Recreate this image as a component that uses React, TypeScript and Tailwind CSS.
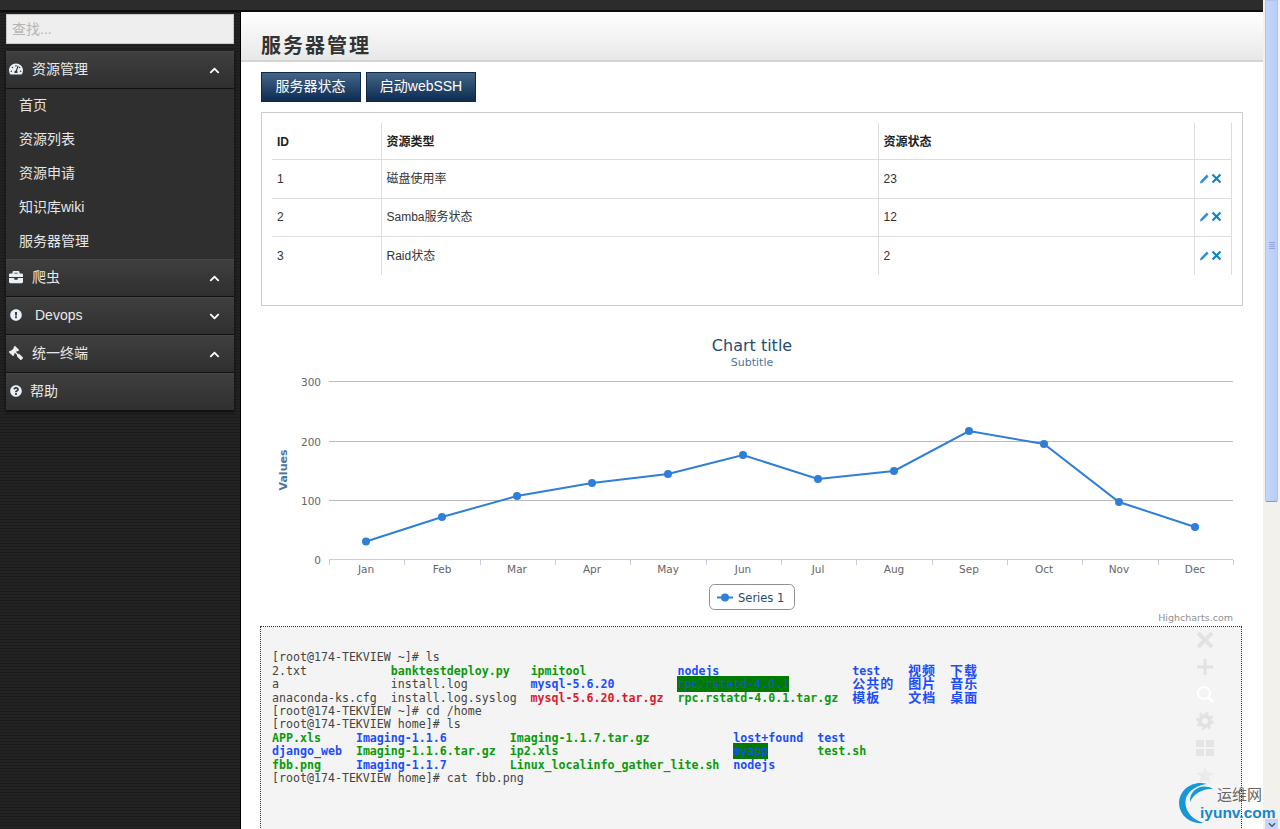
import React from "react";
import { FaTachometerAlt, FaBriefcase, FaExclamationCircle, FaGavel, FaQuestionCircle, FaChevronUp, FaChevronDown } from "react-icons/fa";

const sans = "font-['Liberation_Sans','Noto_Sans_CJK_SC',sans-serif]";

function Header({ icon, label, chevron, labelClass }: { icon: React.ReactNode; label: string; chevron?: "up" | "down"; labelClass: string }) {
  return (
    <div className="flex h-[38px] items-center border-b border-b-[#111] border-t border-t-[#474747] bg-gradient-to-b from-[#3f3f3f] to-[#2f2f2f] pb-[2px] pl-[3px] pr-[14px] text-[14px] text-[#e8e8e8]">
      <span className="flex w-[14px] justify-center text-[#eaf0f8]">{icon}</span>
      <span className={labelClass}>{label}</span>
      <span className="flex-1" />
      {chevron === "up" && <FaChevronUp size={11} className="mt-[3px] text-white" />}
      {chevron === "down" && <FaChevronDown size={11} className="mt-[3px] text-white" />}
    </div>
  );
}

function Row({ id, type, status, strong, height }: { id: string; type: string; status: string; strong?: boolean; height: string }) {
  const tone = strong ? "font-bold text-[#222]" : "text-[#333]";
  const pad = strong ? "pt-[2px]" : "";
  return (
    <tr className={`border-b border-[#ddd] last:border-b-0 ${tone}`}>
      <td className={`${height} ${pad} border-r border-[#ddd] pl-[5px]`}>{id}</td>
      <td className={`${pad} border-r border-[#ddd] pl-[5px]`}>{type}</td>
      <td className={`${pad} border-r border-[#ddd] pl-[5px]`}>{status}</td>
      <td className="border-r border-[#ddd] pb-[1px] pl-[4px]">
        {!strong && (
          <span className="flex items-center gap-[1px]">
            <svg width="11" height="11" viewBox="0 0 11 11"><path d="M1 10.5 L1.5 8 L7.8 1.6 L9.6 3.4 L3.3 9.8 Z" fill="#2f8fd8" /></svg>
            <svg width="11" height="11" viewBox="0 0 11 11"><path d="M1.5 1.5 L9.5 9.5 M9.5 1.5 L1.5 9.5" stroke="#0b87c9" strokeWidth="2.2" /></svg>
          </span>
        )}
      </td>
    </tr>
  );
}

const months = ["Jan", "Feb", "Mar", "Apr", "May", "Jun", "Jul", "Aug", "Sep", "Oct", "Nov", "Dec"];
const pts: [number, number][] = [[105, 211.5], [181, 187], [256, 166], [331, 153], [407, 144], [482, 125], [557, 149], [633, 141], [708, 101], [783, 114], [858, 172], [934, 197]];

function Chart() {
  const label = { fontFamily: "'DejaVu Sans',sans-serif", fontSize: 10.5 };
  return (
    <svg width="982" height="296" viewBox="0 0 982 296" className="block">
      <text x="491" y="21" textAnchor="middle" fill="#274b6d" style={{ fontFamily: "'DejaVu Sans',sans-serif", fontSize: 16 }}>Chart title</text>
      <text x="491" y="36" textAnchor="middle" fill="#4d759e" style={{ fontFamily: "'DejaVu Sans',sans-serif", fontSize: 11 }}>Subtitle</text>
      {[51.5, 111.5, 170.5].map((y) => <line key={y} x1="68" x2="972" y1={y} y2={y} stroke="#bbb" />)}
      <line x1="68" x2="972" y1="229.5" y2="229.5" stroke="#c0d0e0" />
      {Array.from({ length: 13 }, (_, i) => {
        const x = Math.round(68 + i * 75.33) + 0.5;
        return <line key={i} x1={x} x2={x} y1="230" y2="235" stroke="#c0d0e0" />;
      })}
      {[["300", 56], ["200", 116], ["100", 175], ["0", 234]].map(([t, y]) => (
        <text key={t} x="60" y={y as number} textAnchor="end" fill="#666" style={label}>{t}</text>
      ))}
      {months.map((m, i) => (
        <text key={m} x={pts[i][0]} y="243" textAnchor="middle" fill="#666" style={label}>{m}</text>
      ))}
      <text transform="translate(26 140) rotate(-90)" textAnchor="middle" fill="#4d759e" style={{ fontFamily: "'DejaVu Sans',sans-serif", fontSize: 11, fontWeight: 700 }}>Values</text>
      <polyline points={pts.map((p) => p.join(",")).join(" ")} fill="none" stroke="#2f7ed8" strokeWidth="2" />
      {pts.map((p, i) => <circle key={i} cx={p[0]} cy={p[1]} r="4" fill="#2f7ed8" />)}
      <rect x="448.5" y="254.5" width="85" height="25" rx="5" fill="#fff" stroke="#909090" />
      <line x1="456" x2="472" y1="267.5" y2="267.5" stroke="#2f7ed8" strokeWidth="2" />
      <circle cx="464" cy="267.5" r="4" fill="#2f7ed8" />
      <text x="477" y="272" fill="#274b6d" style={{ fontFamily: "'DejaVu Sans',sans-serif", fontSize: 11.5 }}>Series 1</text>
      <text x="972" y="291" textAnchor="end" fill="#909090" style={{ fontFamily: "'DejaVu Sans',sans-serif", fontSize: 9.5 }}>Highcharts.com</text>
    </svg>
  );
}

const g = "font-bold text-[#0a9a0a]";
const b = "font-bold text-[#1c4dff]";
const r = "font-bold text-[#e0182d]";
const hl = "font-normal text-[#1c4dff] bg-[#007a00] py-[1px]";

function Cjk({ children }: { children: string }) {
  return <span className="inline-block h-[13.4px] align-top text-[13px] font-bold leading-[12px] tracking-[1px] text-[#1c4dff]">{children}</span>;
}

function Terminal() {
  return (
    <pre className="font-['DejaVu_Sans_Mono','Noto_Sans_CJK_SC',monospace] text-[11.62px] leading-[13.4px] text-[#444]">
      {"[root@174-TEKVIEW ~]# ls\n"}
      {"2.txt            "}<span className={g}>banktestdeploy.py</span>{"   "}<span className={g}>ipmitool</span>{"             "}<span className={b}>nodejs</span>{"                   "}<span className={b}>test</span>{"    "}<Cjk>视频</Cjk>{"  "}<Cjk>下载</Cjk>{"\n"}
      {"a                install.log         "}<span className={b}>mysql-5.6.20</span>{"         "}<span className={hl}>rpc.rstatd-4.0.1</span>{"         "}<Cjk>公共的</Cjk>{"  "}<Cjk>图片</Cjk>{"  "}<Cjk>音乐</Cjk>{"\n"}
      {"anaconda-ks.cfg  install.log.syslog  "}<span className={r}>mysql-5.6.20.tar.gz</span>{"  "}<span className={g}>rpc.rstatd-4.0.1.tar.gz</span>{"  "}<Cjk>模板</Cjk>{"    "}<Cjk>文档</Cjk>{"  "}<Cjk>桌面</Cjk>{"\n"}
      {"[root@174-TEKVIEW ~]# cd /home\n"}
      {"[root@174-TEKVIEW home]# ls\n"}
      <span className={g}>APP.xls</span>{"     "}<span className={b}>Imaging-1.1.6</span>{"         "}<span className={g}>Imaging-1.1.7.tar.gz</span>{"            "}<span className={b}>lost+found</span>{"  "}<span className={b}>test</span>{"\n"}
      <span className={b}>django_web</span>{"  "}<span className={g}>Imaging-1.1.6.tar.gz</span>{"  "}<span className={g}>ip2.xls</span>{"                         "}<span className={hl}>myapp</span>{"       "}<span className={g}>test.sh</span>{"\n"}
      <span className={g}>fbb.png</span>{"     "}<span className={b}>Imaging-1.1.7</span>{"         "}<span className={g}>Linux_localinfo_gather_lite.sh</span>{"  "}<span className={b}>nodejs</span>{"\n"}
      {"[root@174-TEKVIEW home]# cat fbb.png"}
    </pre>
  );
}

export default function App() {
  return (
    <div className={`${sans} relative flex h-[829px] w-[1280px] overflow-hidden bg-[#222]`}>
      <div className="flex min-w-0 flex-1 flex-col">
        <div className="h-[12px] shrink-0 border-b-2 border-[#0c0c0c] bg-[#2c2c2c]" />
        <div className="flex min-h-0 flex-1">
          <aside className="w-[241px] shrink-0 border-r border-black bg-[#212121] bg-[repeating-linear-gradient(0deg,#1c1c1c_0px,#1c1c1c_1px,#232323_1px,#232323_3px),repeating-linear-gradient(90deg,#1c1c1c_0px,#1c1c1c_1px,transparent_1px,transparent_3px)] pl-[6px] pr-[6px] pt-[2px]">
            <div className="flex h-[30px] w-[228px] items-center border border-[#c8c8c8] bg-[#eee] pl-[5px] text-[14px] text-[#b4b4b4]">查找...</div>
            <div className="mt-[7px] w-[228px] shadow-[0_1px_4px_rgba(0,0,0,0.6)]">
              <Header icon={<FaTachometerAlt size={14} />} label="资源管理" chevron="up" labelClass="ml-[9px]" />
              <div className="flex flex-col bg-[#2f2f2f] pl-[13px] text-[14px] text-[#e6e6e6]">
                {["首页", "资源列表", "资源申请", "知识库wiki", "服务器管理"].map((t) => (
                  <div key={t} className="flex h-[34px] items-center pb-[2px]">{t}</div>
                ))}
              </div>
              <Header icon={<FaBriefcase size={14} />} label="爬虫" chevron="up" labelClass="ml-[9px]" />
              <Header icon={<FaExclamationCircle size={12} />} label="Devops" chevron="down" labelClass="ml-[12px]" />
              <Header icon={<FaGavel size={14} className="-scale-x-100" />} label="统一终端" chevron="up" labelClass="ml-[9px]" />
              <Header icon={<FaQuestionCircle size={12} />} label="帮助" labelClass="ml-[7px]" />
            </div>
          </aside>
          <main className="relative min-w-0 flex-1 overflow-hidden bg-white">
            <div className="flex h-[50px] items-end border-b-2 border-[#d4d4d4] bg-gradient-to-b from-white to-[#e8e8e8] pb-[1px] pl-[20px]">
              <h1 className="text-[20px] font-bold leading-[26px] tracking-[2px] text-[#333]">服务器管理</h1>
            </div>
            <div className="ml-[20px] mt-[10px] flex gap-[5px]">
              <div className="flex h-[30px] w-[100px] items-center justify-center border border-[#0f2a48] bg-gradient-to-b from-[#426689] to-[#0e2d50] pb-[2px] pr-[1px] text-[14px] text-white">服务器状态</div>
              <div className="flex h-[30px] w-[110px] items-center justify-center border border-[#0f2a48] bg-gradient-to-b from-[#426689] to-[#0e2d50] pb-[2px] text-[14px] text-white">启动webSSH</div>
            </div>
            <div className="ml-[20px] mt-[10px] h-[194px] w-[982px] border border-[#ccc] px-[10px] pt-[10px]">
              <table className="w-[959px] table-fixed border-collapse text-[12px]">
                <colgroup>
                  <col className="w-[109px]" />
                  <col className="w-[497px]" />
                  <col className="w-[316px]" />
                  <col className="w-[37px]" />
                </colgroup>
                <tbody>
                  <Row id="ID" type="资源类型" status="资源状态" strong height="h-[36px]" />
                  <Row id="1" type="磁盘使用率" status="23" height="h-[39px]" />
                  <Row id="2" type="Samba服务状态" status="12" height="h-[38px]" />
                  <Row id="3" type="Raid状态" status="2" height="h-[39px]" />
                </tbody>
              </table>
            </div>
            <div className="ml-[20px] mt-[24px]"><Chart /></div>
            <div className="ml-[19px] h-[300px] w-[982px] border border-dotted border-[#333] bg-[#f4f4f4] pl-[11px] pt-[24.4px]">
              <Terminal />
            </div>
            {/* floating translucent toolbar over the terminal */}
            <div className="absolute left-[954px] top-[619px] flex w-[20px] flex-col items-center gap-[9px]">
              <svg width="18" height="18" viewBox="0 0 18 18"><path d="M2 2 L16 16 M16 2 L2 16" stroke="#e2e2e2" strokeWidth="4" /></svg>
              <svg width="18" height="18" viewBox="0 0 18 18"><path d="M9 1 V17 M1 9 H17" stroke="#e2e2e2" strokeWidth="3" /></svg>
              <svg width="18" height="18" viewBox="0 0 18 18"><circle cx="8" cy="8" r="6" fill="none" stroke="#fff" strokeWidth="2" /><path d="M12 12 L17 17" stroke="#fff" strokeWidth="3" /></svg>
              <svg width="18" height="18" viewBox="0 0 18 18"><circle cx="9" cy="9" r="5" fill="none" stroke="#e2e2e2" strokeWidth="4" /><circle cx="9" cy="9" r="8" fill="none" stroke="#e2e2e2" strokeWidth="2" strokeDasharray="3 3.3" /></svg>
              <svg width="18" height="18" viewBox="0 0 18 18"><path d="M0 1 H8 V8 H0 Z M10 1 H18 V8 H10 Z M0 10 H8 V17 H0 Z M10 10 H18 V17 H10 Z" fill="#e4e4e4" /></svg>
              <svg width="18" height="18" viewBox="0 0 18 18"><path d="M9 0 L11.5 6.5 L18 7 L13 11 L14.8 18 L9 14 L3.2 18 L5 11 L0 7 L6.5 6.5 Z" fill="#ebebeb" /></svg>
            </div>
          </main>
        </div>
      </div>
      <div className="relative w-[17px] shrink-0 bg-[#f3f1ec]">
        <div className="ml-[2px] flex h-[502px] w-[13px] flex-col items-center justify-center gap-[1px] rounded-b-[2px] border border-[#b0c4f0] border-b-[#6f9be8] bg-gradient-to-r from-[#c6d6fa] to-[#b8ccf6] pb-[12px]">
          <span className="h-px w-[6px] bg-[#8ea6dc]" />
          <span className="h-px w-[6px] bg-[#8ea6dc]" />
          <span className="h-px w-[6px] bg-[#8ea6dc]" />
          <span className="h-px w-[6px] bg-[#8ea6dc]" />
        </div>
        <div className="absolute bottom-0 left-[2px] flex h-[10px] w-[13px] items-start justify-center bg-[#c6d6fa] pt-[2px]">
          <FaChevronDown size={8} className="text-[#3a4a70]" />
        </div>
      </div>
      {/* watermark */}
      <div className="absolute left-[1177px] top-[781px] h-[46px] w-[100px]">
        <svg width="40" height="46" viewBox="0 0 40 46" className="absolute left-0 top-0">
          <path d="M30 3 C14 -2 -2 12 3 28 C7 39 17 43 27 42 C15 39 6 29 9 17 C12 9 21 4 30 3 Z" fill="#1597d8" />
          <path d="M36 8 C24 1 12 10 13 21 C16 13 26 7 36 8 Z" fill="#1597d8" />
        </svg>
        <span className="absolute left-[40px] top-[5px] text-[15px] leading-[17px] text-[#666]">运维网</span>
        <span className="absolute left-[23px] top-[23px] text-[15.5px] font-bold leading-[18px] text-[#1488cc]">iyunv.com</span>
      </div>
    </div>
  );
}
